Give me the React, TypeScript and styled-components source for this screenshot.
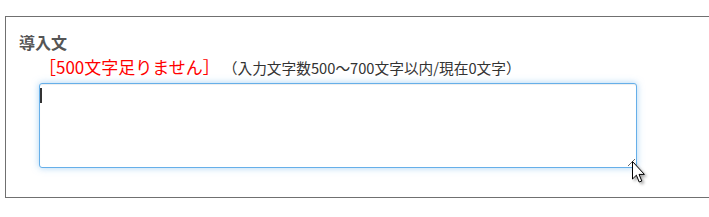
import React from 'react';
import styled, { createGlobalStyle } from 'styled-components';

const GlobalStyle = createGlobalStyle`
  html, body {
    margin: 0;
    padding: 0;
    background: #fff;
    overflow: hidden;
  }
  body {
    font-family: "Noto Sans CJK JP", "Noto Sans", sans-serif;
  }
`;

const Page = styled.div`
  padding: 16px 0 0 5px;
  width: 709px;
  height: 217px;
  box-sizing: border-box;
  overflow: hidden;
`;

const Panel = styled.section`
  width: 760px;
  height: 182px;
  box-sizing: border-box;
  border: 1px solid #707070;
  padding: 14px 0 0 13px;
`;

const Title = styled.h3`
  margin: 0;
  font-size: 16px;
  line-height: 22px;
  font-weight: bold;
  color: #555;
`;

const Body = styled.div`
  padding-left: 20px;
`;

const Notice = styled.div`
  display: flex;
  align-items: baseline;
  height: 30px;
  line-height: 28px;
`;

const Warning = styled.span`
  font-size: 17px;
  color: #ff0000;
`;

const Hint = styled.span`
  margin-left: 3px;
  font-size: 14.7px;
  color: #333;
`;

const Field = styled.div`
  position: relative;
  width: 598px;
`;

const TextArea = styled.textarea`
  display: block;
  width: 598px;
  height: 85px;
  box-sizing: border-box;
  margin: 0;
  padding: 4px 6px;
  border: 1px solid #66afe9;
  border-radius: 3px;
  outline: none;
  resize: both;
  font-family: inherit;
  font-size: 14px;
  box-shadow: inset 0 1px 1px rgba(0, 0, 0, 0.075),
    0 0 7px rgba(102, 175, 233, 0.55);
`;

const Caret = styled.span`
  position: absolute;
  left: 1px;
  top: 5px;
  width: 2px;
  height: 15px;
  background: #333;
`;

const Pointer = styled.svg`
  position: absolute;
  left: 593px;
  top: 78px;
  filter: drop-shadow(2px 2px 1.5px rgba(0, 0, 0, 0.35));
`;

export default function App() {
  return (
    <>
      <GlobalStyle />
      <Page>
        <Panel>
          <Title>導入文</Title>
          <Body>
            <Notice>
              <Warning>［500文字足りません］</Warning>
              <Hint>（入力文字数500～700文字以内/現在0文字）</Hint>
            </Notice>
            <Field>
              <TextArea />
              <Caret />
              <Pointer width="14" height="23" viewBox="0 0 14 23">
                <path
                  d="M0.5 0.5 L0.5 18 L4.4 14.2 L7.2 21 L9.8 20 L7 13.4 L12.4 13.4 Z"
                  fill="#fff"
                  stroke="#000"
                  strokeWidth="1"
                  strokeLinejoin="round"
                />
              </Pointer>
            </Field>
          </Body>
        </Panel>
      </Page>
    </>
  );
}
